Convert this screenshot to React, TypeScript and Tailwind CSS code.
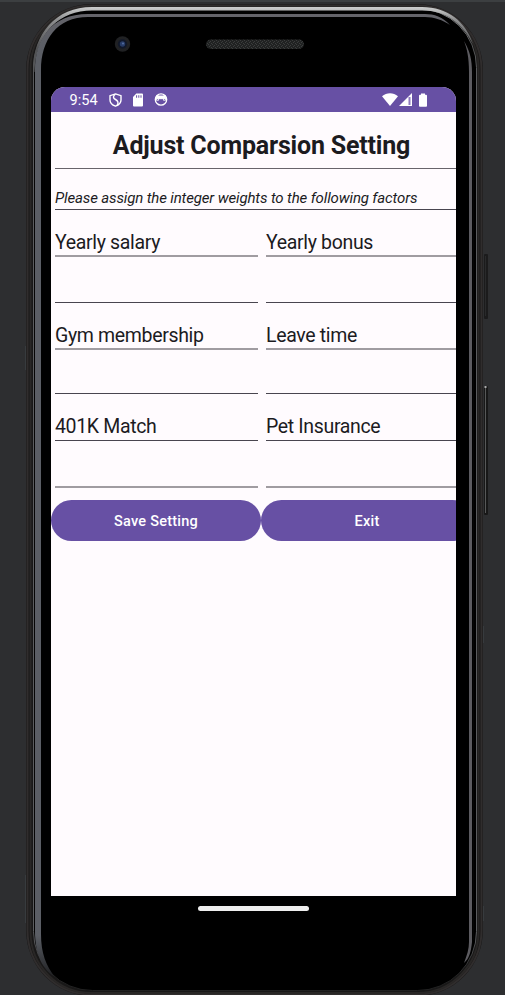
import type { ReactNode } from "react";

function PhoneFrame() {
  return (
    <svg className="absolute inset-0 h-[995px] w-[505px]" viewBox="0 0 505 995" fill="none" aria-hidden="true">
      <defs>
        <linearGradient id="rim" x1="0" y1="0" x2="0" y2="995" gradientUnits="userSpaceOnUse">
          <stop offset="0" stopColor="#8d8e8f" />
          <stop offset=".045" stopColor="#555657" />
          <stop offset=".09" stopColor="#5c5d5f" />
          <stop offset=".94" stopColor="#5c5d5f" />
          <stop offset=".98" stopColor="#242424" />
          <stop offset="1" stopColor="#202020" />
        </linearGradient>
        <linearGradient id="shine" x1="0" y1="7" x2="0" y2="90" gradientUnits="userSpaceOnUse">
          <stop offset="0" stopColor="#cccdcd" />
          <stop offset=".15" stopColor="#8f9091" />
          <stop offset=".5" stopColor="#505153" />
          <stop offset="1" stopColor="#5c5d5f" />
        </linearGradient>
        <linearGradient id="glass" x1="0" y1="0" x2="0" y2="995" gradientUnits="userSpaceOnUse">
          <stop offset="0" stopColor="#68666c" />
          <stop offset=".05" stopColor="#5b5e65" />
          <stop offset=".94" stopColor="#5b5e65" />
          <stop offset="1" stopColor="#050505" />
        </linearGradient>
        <pattern id="mesh" width="4" height="4" patternUnits="userSpaceOnUse">
          <rect width="4" height="4" fill="#202222" />
          <path d="M0 0h1v1H0zM2 1h1v1H2zM1 2h1v1H1zM3 3h1v1H3z" fill="#3b3d3d" />
        </pattern>
      </defs>
      <rect x="484" y="254" width="4" height="65" rx="1" fill="#1b1b1c" />
      <path d="M485.500 256v60" stroke="#292a2b" />
      <rect x="484" y="386" width="4" height="129" rx="1" fill="#181818" />
      <path d="M485.500 387v126" stroke="#575858" />
      <path d="M484.500 387h2" stroke="#aaa" strokeWidth="2" />
      <path d="M25.500 346v24M25.500 875v48M483.500 626v17M483.500 906v15" stroke="#373b3e" />
      <rect x="26" y="4" width="457" height="992" rx="66" fill="#191818" />
      <rect x="27.500" y="5.500" width="454" height="989" rx="64" stroke="#302d2d" strokeWidth="2" />
      <rect x="30.500" y="7" width="448" height="986" rx="61" stroke="#292726" strokeWidth="2" />
      <rect x="33.500" y="8.500" width="443" height="982" rx="59" fill="#000" stroke="url(#rim)" />
      <path d="M33 90V70C33 34 56 7 92 7H422C448 7 466 22 473 44C462 23 446 10.500 422 10.500H92C60 10.500 36 32 34.500 72V90Z" fill="url(#shine)" />
      <path d="M41 934V70C41 40 57 17 88 17H425C434 17 443 20 450 25C443 17 434 14 425 14H88C51 14 35 40 35 70V931C35 955 43 970 55 977C46 966 41 953 41 934Z" fill="url(#glass)" />
      <path d="M464 41C470 51 472 60 472 72V942C471 952 469 959 464 963C467 955 469 949 469 942V72C469 57 467 49 464 41Z" fill="#5c5b60" />
      <path d="M34.500 72V932M473.500 70V940" stroke="#050505" />
      <rect x="206" y="39.500" width="98" height="9.500" rx="4.750" fill="url(#mesh)" />
      <circle cx="122.500" cy="44" r="7.700" fill="#202123" />
      <circle cx="122.500" cy="44" r="4.700" fill="#111829" />
      <circle cx="122.500" cy="44" r="2.700" fill="#273c68" />
      <circle cx="123" cy="43.500" r="1" fill="#5670a3" />
    </svg>
  );
}

function StatusBar() {
  return (
    <header className="flex h-[25px] shrink-0 items-center bg-[#6750a4] pl-[18.500px] pr-[29px] text-white">
      <span className="w-[39px] pt-[2px] text-[14.500px] leading-[23px] tracking-[0.1px]">9:54</span>
      <svg className="h-[14px] w-[13px]" viewBox="0 0 13 14" fill="none" stroke="currentColor" strokeWidth="1.400">
        <path d="M6.500.9 12 2.700V7c0 2.900-2.100 5-5.500 6.200C3.100 12 1 9.900 1 7V2.700L6.500.9Z" />
        <path d="M6.200 1.200C3.700 3.200 4 5.300 6.500 6.500s3.300 3.400 1.600 5.700" />
      </svg>
      <svg className="ml-[11px] h-[14px] w-[10px]" viewBox="0 0 10 14" fill="currentColor">
        <path fillRule="evenodd" d="M3.300.4H9q1 0 1 1V12.500q0 1-1 1H1q-1 0-1-1V4L3.300.4ZM3.100 2.200v2.500h1V2.200zm2.200 0v2.500h1V2.200zm2.200 0v2.500h1V2.200z" />
      </svg>
      <svg className="ml-[11px] h-[13px] w-[14px]" viewBox="0 0 14 13" fill="none" stroke="currentColor">
        <circle cx="7" cy="6.500" r="5.700" strokeWidth="1.300" />
        <path d="M3 2.300 4.900 3h4.200L11 2.300l1 3.400H2L3 2.300Z" fill="currentColor" />
        <path d="M2.500 6v1.300h2V6M9.500 6v1.300h2V6" strokeWidth=".8" />
      </svg>
      <div className="flex-1" />
      <svg className="h-[13px] w-[16px]" viewBox="0 0 16 13" fill="currentColor">
        <path d="M0 3.200C4.700-.8 11.300-.8 16 3.200L8 13 0 3.200Z" />
      </svg>
      <svg className="ml-px h-[13px] w-[13px]" viewBox="0 0 13 13" fill="none">
        <path d="M0 13 13 0V13Z" fill="white" />
        <path d="M10.500 4v8" stroke="#8d7abe" strokeWidth="2" />
      </svg>
      <svg className="ml-[7px] h-[14px] w-[8px]" viewBox="0 0 8 14" fill="currentColor">
        <path d="M2 .5h4v1.300h1q1 0 1 1V13q0 .8-1 .8H1q-1 0-1-.8V2.800q0-1 1-1h1V.5Z" />
      </svg>
    </header>
  );
}

function Cell({ children, height, soft = false }: { children?: ReactNode; height: string; soft?: boolean }) {
  return (
    <div className={`${height} mx-1 flex items-end whitespace-nowrap text-[19.500px] leading-[23px] tracking-[-0.340px] ${soft ? "border-b-2 border-[#a09ca1] pb-px" : "border-b border-[#49454f] pb-[2px]"}`}>
      {children}
    </div>
  );
}

export default function App() {
  return (
    <main className="relative h-[995px] w-[505px] overflow-hidden border-t-2 border-[#3c3f41] bg-[#2d2e30] font-['Roboto',sans-serif]">
      <div className="absolute inset-x-0 -top-[2px]">
        <PhoneFrame />
      </div>
      <div className="relative ml-[51px] mt-[85px] flex w-[405px] flex-col">
        <section className="flex h-[809px] flex-col overflow-hidden rounded-t-[14px] bg-[#fffbfe] text-[#1c1b1f]">
          <StatusBar />
          <h1 className="ml-1 flex h-[57px] items-center justify-center whitespace-nowrap border-b border-[#68646b] pl-[12px] pt-[11px] text-[25px] font-bold leading-[30px] tracking-[-0.190px]">
            Adjust Comparsion Setting
          </h1>
          <p className="ml-1 flex h-[41px] items-end whitespace-nowrap border-b border-[#49454f] pb-[2px] text-[15px] italic leading-[18px] tracking-[-0.140px]">
            Please assign the integer weights to the following factors
          </p>
          <div className="grid w-[422px] grid-cols-[211px_211px]">
            <Cell height="h-[47px]" soft>Yearly salary</Cell>
            <Cell height="h-[47px]" soft>Yearly bonus</Cell>
            <Cell height="h-[46px]" />
            <Cell height="h-[46px]" />
            <Cell height="h-[47px]" soft>Gym membership</Cell>
            <Cell height="h-[47px]" soft>Leave time</Cell>
            <Cell height="h-[44px]" />
            <Cell height="h-[44px]" />
            <Cell height="h-[47px]">401K Match</Cell>
            <Cell height="h-[47px]">Pet Insurance</Cell>
            <Cell height="h-[47px]" soft />
            <Cell height="h-[47px]" soft />
          </div>
          <div className="mt-3 flex w-[420px] shrink-0">
            <button className="h-[41px] w-[210px] shrink-0 rounded-full bg-[#6750a4] pt-[2px] text-[14.500px] font-medium tracking-[0.240px] text-white">Save Setting</button>
            <button className="h-[41px] w-[212px] shrink-0 rounded-full bg-[#6750a4] pt-[2px] text-[14.500px] font-medium tracking-[0.240px] text-white">Exit</button>
          </div>
        </section>
        <div className="mt-[10px] h-[5px] w-[111px] self-center rounded-full bg-[#eeeeee]" />
      </div>
    </main>
  );
}
